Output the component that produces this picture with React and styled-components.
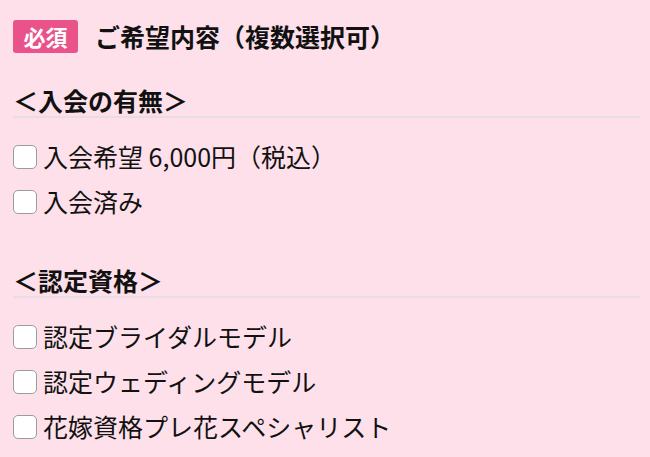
import React from "react";
import styled, { createGlobalStyle } from "styled-components";

const GlobalStyle = createGlobalStyle`
  html, body {
    margin: 0;
    padding: 0;
    background: #fde0ea;
  }
  body {
    font-family: "Noto Sans CJK JP", "Noto Sans", sans-serif;
    color: #111111;
  }
`;

const FormSection = styled.div`
  padding: 20px 10px 0 13px;
  box-sizing: border-box;
  width: 650px;
`;

const TitleRow = styled.div`
  display: flex;
  align-items: center;
  gap: 17px;
  height: 32px;
`;

const RequiredBadge = styled.span`
  display: inline-flex;
  align-items: center;
  justify-content: center;
  height: 33px;
  width: 65px;
  border-radius: 3px;
  background: #e9538a;
  color: #ffffff;
  font-size: 22px;
  font-weight: 700;
  line-height: 1;
`;

const Title = styled.h2`
  margin: 0;
  font-size: 25px;
  font-weight: 700;
  line-height: 32px;
`;

const Group = styled.div`
  margin-top: ${(props) => props.gap}px;
`;

const GroupHeading = styled.h3`
  margin: 0;
  font-size: 25px;
  font-weight: 700;
  line-height: 32px;
  border-bottom: 2px solid #e8dde2;
`;

const OptionList = styled.div`
  display: flex;
  flex-direction: column;
  margin-top: 16px;
`;

const OptionRow = styled.label`
  display: flex;
  align-items: center;
  gap: 6px;
  height: 45px;
  font-size: 25px;
  line-height: 1;
  cursor: pointer;
`;

const Box = styled.input`
  appearance: none;
  margin: 0;
  width: 24px;
  height: 24px;
  border: 1.5px solid #9c9c9c;
  border-radius: 5px;
  background: #ffffff;
  box-sizing: border-box;
  flex-shrink: 0;
`;

const groups = [
  {
    id: "membership",
    heading: "＜入会の有無＞",
    gap: 32,
    options: ["入会希望 6,000円（税込）", "入会済み"],
  },
  {
    id: "license",
    heading: "＜認定資格＞",
    gap: 40,
    options: [
      "認定ブライダルモデル",
      "認定ウェディングモデル",
      "花嫁資格プレ花スペシャリスト",
    ],
  },
];

const App = () => {
  return (
    <>
      <GlobalStyle />
      <FormSection>
        <TitleRow>
          <RequiredBadge>必須</RequiredBadge>
          <Title>ご希望内容（複数選択可）</Title>
        </TitleRow>
        {groups.map((group) => (
          <Group key={group.id} gap={group.gap}>
            <GroupHeading>{group.heading}</GroupHeading>
            <OptionList>
              {group.options.map((opt) => (
                <OptionRow key={opt}>
                  <Box type="checkbox" />
                  {opt}
                </OptionRow>
              ))}
            </OptionList>
          </Group>
        ))}
      </FormSection>
    </>
  );
};

export default App;
